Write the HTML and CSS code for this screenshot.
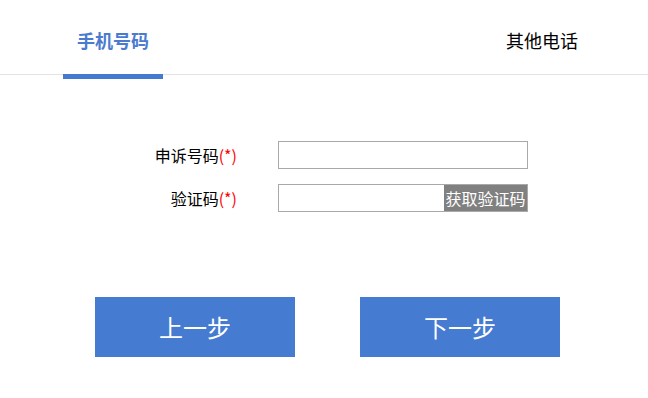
FILE: index.html
```html
<!DOCTYPE html>
<html lang="zh-CN">
<head>
<meta charset="utf-8">
<title>申诉</title>
<link rel="stylesheet" href="styles.css">
</head>
<body>
<div class="tabs">
  <div class="tab tab-active">手机号码</div>
  <div class="tab">其他电话</div>
</div>
<div class="form">
  <label class="label">申诉号码<span class="req">(*)</span></label>
  <div class="field"><input class="input" type="text"></div>
  <label class="label">验证码<span class="req">(*)</span></label>
  <div class="field field-code">
    <input class="input input-plain" type="text">
    <span class="code-btn">获取验证码</span>
  </div>
</div>
<div class="actions">
  <div class="btn">上一步</div>
  <div class="btn">下一步</div>
</div>
</body>
</html>
```
FILE: styles.css
```css
html, body {
  margin: 0;
  padding: 0;
  background: #ffffff;
  font-family: "Noto Sans CJK SC", "Microsoft YaHei", sans-serif;
  color: #000;
}
.tabs {
  height: 74px;
  border-bottom: 1px solid #e3e3e3;
  display: flex;
  justify-content: space-between;
  align-items: flex-start;
  padding: 0 56px 0 63px;
}
.tab {
  width: 100px;
  height: 47px;
  padding-top: 27px;
  line-height: 26px;
  font-size: 18px;
  text-align: center;
  color: #000;
}
.tab-active {
  color: #4a7bd0;
  font-weight: bold;
  border-bottom: 5px solid #447bd1;
}
.form {
  margin-top: 66px;
  display: grid;
  grid-template-columns: 237px 250px;
  column-gap: 41px;
  row-gap: 15px;
  align-items: center;
}
.label {
  text-align: right;
  font-size: 16px;
  line-height: 20px;
  color: #000;
}
.req {
  color: #ff0000;
}
.field {
  box-sizing: border-box;
  width: 250px;
  height: 28px;
  display: flex;
}
.input {
  box-sizing: border-box;
  width: 100%;
  height: 28px;
  border: 1px solid #a9a9a9;
  margin: 0;
  padding: 0 4px;
  font-size: 14px;
  outline: none;
}
.field-code {
  border: 1px solid #a9a9a9;
}
.input-plain {
  border: none;
  height: 26px;
  flex: 1;
  min-width: 0;
}
.code-btn {
  width: 83px;
  height: 26px;
  background: #808080;
  color: #ffffff;
  font-size: 16px;
  line-height: 26px;
  text-align: center;
  white-space: nowrap;
}
.actions {
  margin-top: 85px;
  padding-left: 95px;
  display: flex;
  gap: 65px;
}
.btn {
  width: 200px;
  height: 60px;
  background: #457bd1;
  color: #ffffff;
  font-size: 24px;
  line-height: 60px;
  text-align: center;
}
```
